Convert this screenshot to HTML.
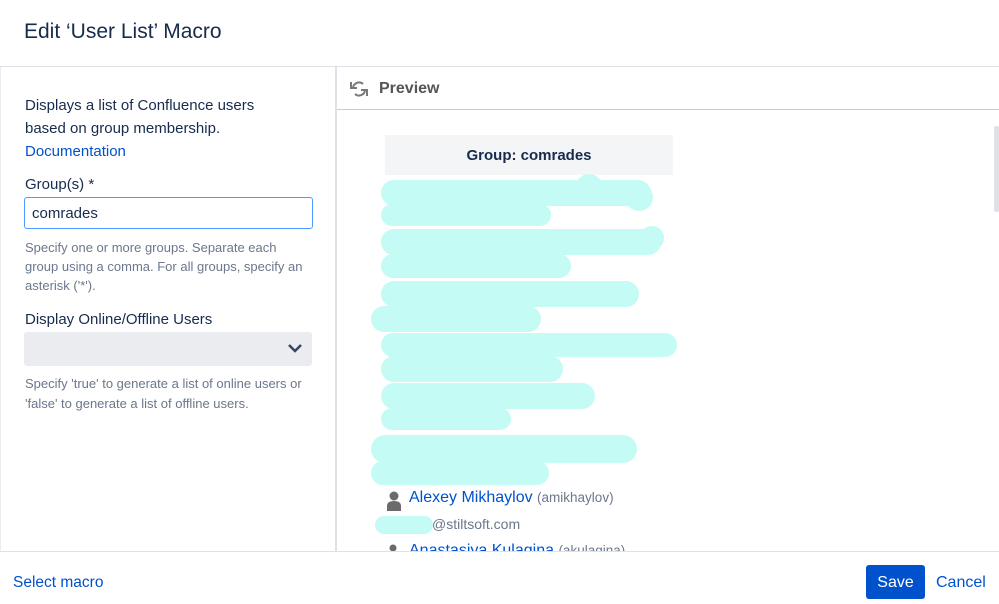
<!DOCTYPE html>
<html><head><style>
body{margin:0;width:999px;height:604px;overflow:hidden;background:#fff;font-family:"Liberation Sans",sans-serif;position:relative;color:#172b4d}
.a{position:absolute}
.b{position:absolute;background:#c4fbf4;border-radius:14px}
.c{position:absolute;background:#c4fbf4;border-radius:50%}
</style></head><body>
<div class="a" style="left:24px;top:20px;font-size:21px;color:#172b4d">Edit ‘User List’ Macro</div>
<div class="a" style="left:0;top:66px;width:999px;height:1px;background:#dfe1e6"></div>
<div class="a" style="left:0;top:67px;width:1px;height:484px;background:#ebecf0"></div>
<div class="a" style="left:335px;top:67px;width:2px;height:484px;background:#dfe1e6"></div>
<div class="a" style="left:0;top:551px;width:999px;height:1px;background:#dfe1e6"></div>

<div class="a" style="left:25px;top:94px;font-size:15px;line-height:23px;color:#172b4d;width:255px">Displays a list of Confluence users based on group membership.<br><span style="color:#0052cc">Documentation</span></div>
<div class="a" style="left:25px;top:176px;font-size:15px;color:#172b4d">Group(s) *</div>
<div class="a" style="left:24px;top:197px;width:289px;height:32px;border:1.5px solid #4c9aff;border-radius:3px;box-sizing:border-box;font-size:15px;padding:7px 0 0 7px">comrades</div>
<div class="a" style="left:25px;top:238px;font-size:13px;line-height:19px;color:#6b778c;width:282px">Specify one or more groups. Separate each group using a comma. For all groups, specify an asterisk ('*').</div>
<div class="a" style="left:25px;top:311px;font-size:15px;color:#172b4d">Display Online/Offline Users</div>
<div class="a" style="left:24px;top:332px;width:288px;height:34px;background:#ebecf0;border-radius:3px"></div>
<svg class="a" style="left:287px;top:342px" width="16" height="12"><path d="M2 3l6 6 6-6" stroke="#344563" stroke-width="2.5" fill="none"/></svg>
<div class="a" style="left:25px;top:374px;font-size:13px;line-height:20px;color:#6b778c;width:290px">Specify 'true' to generate a list of online users or 'false' to generate a list of offline users.</div>

<svg class="a" style="left:349px;top:79px" width="20" height="20" viewBox="0 0 20 20"><path d="M4 9a6 6 0 0 1 10-4M16 11a6 6 0 0 1-10 4" stroke="#7a7a7a" stroke-width="2" fill="none"/><path d="M2 3v6h6M18 17v-6h-6" stroke="#7a7a7a" stroke-width="2" fill="none"/></svg>
<div class="a" style="left:379px;top:80px;font-size:16px;font-weight:bold;color:#555">Preview</div>
<div class="a" style="left:337px;top:109px;width:662px;height:1px;background:#ccc"></div>
<div class="a" style="left:994px;top:126px;width:5px;height:86px;background:#dfe1e6;border-radius:2px"></div>

<div class="a" style="left:385px;top:135px;width:288px;height:40px;background:#f4f5f7;text-align:center;line-height:42px;font-size:15px;font-weight:bold;color:#172b4d">Group: comrades</div>

<div class="b" style="left:381px;top:180px;width:270px;height:26px"></div>
<div class="b" style="left:381px;top:204px;width:170px;height:22px"></div>
<div class="b" style="left:381px;top:229px;width:280px;height:26px"></div>
<div class="b" style="left:381px;top:254px;width:190px;height:24px"></div>
<div class="b" style="left:381px;top:281px;width:258px;height:26px"></div>
<div class="b" style="left:371px;top:306px;width:170px;height:26px"></div>
<div class="b" style="left:381px;top:333px;width:296px;height:24px"></div>
<div class="b" style="left:381px;top:356px;width:182px;height:26px"></div>
<div class="b" style="left:381px;top:383px;width:214px;height:26px"></div>
<div class="b" style="left:381px;top:408px;width:130px;height:22px"></div>
<div class="b" style="left:371px;top:435px;width:266px;height:28px"></div>
<div class="b" style="left:371px;top:461px;width:178px;height:24px"></div>
<div class="c" style="left:575px;top:174px;width:28px;height:30px"></div>
<div class="c" style="left:625px;top:183px;width:28px;height:28px"></div>
<div class="c" style="left:640px;top:226px;width:24px;height:24px"></div>

<svg class="a" style="left:386px;top:490px" width="16" height="22"><circle cx="8" cy="6" r="4.5" fill="#6b6b6b"/><path d="M1 21v-5q0-5 7-5t7 5v5z" fill="#6b6b6b"/></svg>
<div class="a" style="left:409px;top:489px;font-size:16px;color:#0052cc">Alexey Mikhaylov <span style="font-size:13.5px;color:#6b778c">(amikhaylov)</span></div>
<div class="b" style="left:375px;top:516px;width:58px;height:18px"></div>
<div class="a" style="left:432px;top:516px;font-size:14px;color:#6b778c">@stiltsoft.com</div>
<div class="a" style="left:337px;top:542px;width:656px;height:9px;overflow:hidden"><svg class="a" style="left:51px;top:2px" width="10" height="8"><circle cx="5" cy="4" r="3.5" fill="#6b6b6b"/></svg><div class="a" style="left:72px;top:0px;font-size:16px;color:#0052cc;white-space:nowrap">Anastasiya Kulagina <span style="font-size:13.5px;color:#6b778c">(akulagina)</span></div></div>

<div class="a" style="left:13px;top:574px;font-size:15.5px;color:#0052cc">Select macro</div>
<div class="a" style="left:866px;top:565px;width:59px;height:34px;background:#0052cc;border-radius:3px;color:#fff;font-size:16px;text-align:center;line-height:35px">Save</div>
<div class="a" style="left:936px;top:574px;font-size:16px;color:#0052cc">Cancel</div>
</body></html>
